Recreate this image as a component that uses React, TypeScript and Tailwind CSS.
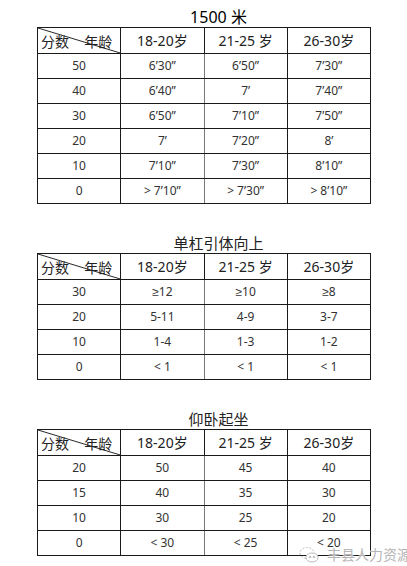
const font = {
  fontFamily: '"Noto Sans", "Liberation Sans", "Noto Sans CJK SC", sans-serif',
};

type TableData = {
  title: string;
  titleClass: string;
  rows: string[][];
};

const tables: TableData[] = [
  {
    title: "1500 米",
    titleClass: "mt-[7px] text-[16px] text-[#000]",
    rows: [
      ["50", "6’30”", "6’50”", "7’30”"],
      ["40", "6’40”", "7’", "7’40”"],
      ["30", "6’50”", "7’10”", "7’50”"],
      ["20", "7’", "7’20”", "8’"],
      ["10", "7’10”", "7’30”", "8’10”"],
      ["0", "> 7’10”", "> 7’30”", "> 8’10”"],
    ],
  },
  {
    title: "单杠引体向上",
    titleClass: "mt-[29px] text-[15px] text-[#222]",
    rows: [
      ["30", "≥12", "≥10", "≥8"],
      ["20", "5-11", "4-9", "3-7"],
      ["10", "1-4", "1-3", "1-2"],
      ["0", "< 1", "< 1", "< 1"],
    ],
  },
  {
    title: "仰卧起坐",
    titleClass: "mt-[29px] text-[15px] text-[#222]",
    rows: [
      ["20", "50", "45", "40"],
      ["15", "40", "35", "30"],
      ["10", "30", "25", "20"],
      ["0", "< 30", "< 25", "< 20"],
    ],
  },
];

function ScoreTable({ data }: { data: TableData }) {
  return (
    <div className="flex flex-col">
      <div className={`h-[20px] leading-[20px] pl-[30px] text-center ${data.titleClass}`}>
        {data.title}
      </div>
      <table className="ml-[37px] w-[334px] table-fixed border-collapse border border-[#1a1a1a]">
        <thead>
          <tr className="h-[26px] text-[14px] text-[#222]">
            <th className="relative border border-[#1a1a1a] p-0 font-normal">
              <svg
                className="absolute left-0 top-0 h-full w-full"
                viewBox="0 0 83 26"
                preserveAspectRatio="none"
              >
                <line x1="0" y1="0" x2="83" y2="26" stroke="#222" strokeWidth="1" />
              </svg>
              <div className="flex justify-between pl-[3px] pr-[8px] pt-[2px] leading-[22px]">
                <span>分数</span>
                <span>年龄</span>
              </div>
            </th>
            <th className="border border-[#1a1a1a] p-0 font-normal">18-20岁</th>
            <th className="border border-[#1a1a1a] p-0 font-normal">21-25 岁</th>
            <th className="border border-[#1a1a1a] p-0 font-normal">26-30岁</th>
          </tr>
        </thead>
        <tbody>
          {data.rows.map((row, i) => (
            <tr key={i} className="h-[25px] text-[12px] text-[#333]">
              {row.map((cell, j) => (
                <td
                  key={j}
                  className={`border border-[#1a1a1a] p-0 text-center ${
                    j === 1 ? "border-r-[#777]" : ""
                  }`}
                >
                  {cell}
                </td>
              ))}
            </tr>
          ))}
        </tbody>
      </table>
    </div>
  );
}

export default function App() {
  return (
    <div className="relative h-[566px] w-[407px] overflow-hidden bg-white" style={font}>
      {tables.map((t, i) => (
        <ScoreTable key={i} data={t} />
      ))}

      {/* 水印 */}
      <div className="pointer-events-none absolute left-[299px] top-[545px] flex items-center gap-[8px] whitespace-nowrap">
        <svg width="20" height="18" viewBox="0 0 20 18" fill="none" stroke="#bbb" strokeWidth="1">
          <ellipse cx="8" cy="7" rx="7" ry="5.5" strokeDasharray="2 1.5" />
          <ellipse cx="13" cy="11.5" rx="6" ry="4.5" fill="white" />
          <circle cx="11" cy="11" r="0.8" fill="#bbb" />
          <circle cx="15" cy="11" r="0.8" fill="#bbb" />
        </svg>
        <span
          className="text-[14px] leading-[20px] text-[#b5b5b5]"
          style={{ textShadow: "0 0 2px #fff, 0 0 2px #fff" }}
        >
          丰县人力资源局
        </span>
      </div>
    </div>
  );
}
